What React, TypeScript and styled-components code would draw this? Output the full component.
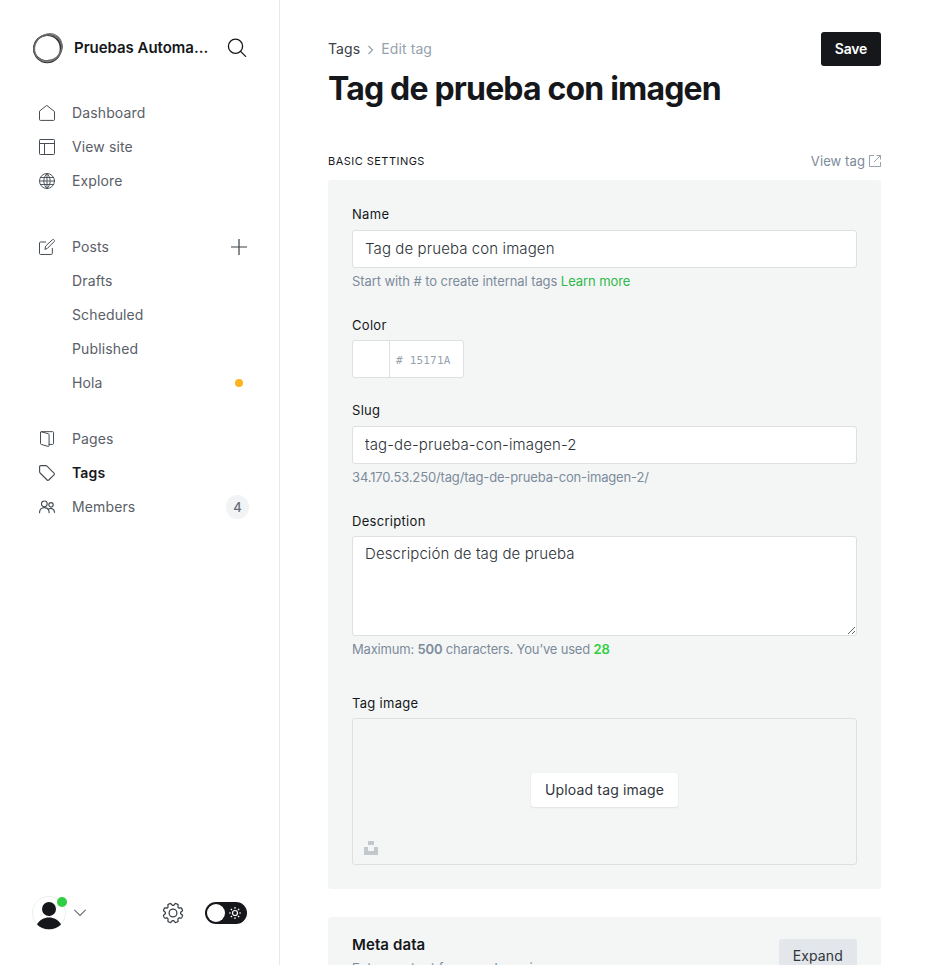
import React from "react";
import styled, { createGlobalStyle } from "styled-components";

const GlobalStyle = createGlobalStyle`
  *, *::before, *::after { box-sizing: border-box; }
  html, body { margin: 0; height: 100%; overflow: hidden; background: #fff; }
  body {
    font-family: Inter, "Liberation Sans", sans-serif;
    font-size: 15px;
    line-height: 1.6;
    letter-spacing: 0.2px;
    color: #15171a;
  }
  button, input, textarea { font-family: inherit; letter-spacing: inherit; }
`;

const Layout = styled.div`
  display: flex;
  height: 965px;
  overflow: hidden;
`;

const Sidebar = styled.nav`
  display: flex;
  flex-direction: column;
  flex: 0 0 280px;
  height: 965px;
  padding: 32px 0 34px;
  border-right: 1px solid #e6e9eb;
  background: #fff;
`;

const SiteHeader = styled.header`
  display: flex;
  align-items: center;
  height: 32px;
  padding: 0 32px;
  margin-bottom: 32px;
`;

const SiteName = styled.div`
  width: 136px;
  margin-left: 10px;
  white-space: nowrap;
  font-size: 15px;
  font-weight: 600;
  line-height: 20px;
  letter-spacing: -0.03px;
`;

const SearchButton = styled.button`
  display: flex;
  margin-left: 17px;
  padding: 0;
  border: 0;
  background: none;
  color: #15171a;
`;

const NavGroup = styled.ul<{ $gap: number }>`
  list-style: none;
  margin: 0 0 ${(p) => p.$gap}px;
  padding: 0 30px 0 39px;
`;

const NavItem = styled.li<{ $active?: boolean }>`
  display: flex;
  align-items: center;
  height: 34px;
  font-size: 14px;
  letter-spacing: 0.13px;
  font-weight: ${(p) => (p.$active ? 600 : 400)};
  color: ${(p) => (p.$active ? "#15171a" : "#5a6067")};
`;

const NavIcon = styled.span`
  display: flex;
  width: 33px;
  color: #454c54;
`;

const NavLabel = styled.span`
  flex: 1;
`;

const AddButton = styled.button`
  display: flex;
  margin-right: 2px;
  padding: 0;
  border: 0;
  background: none;
  color: #394047;
`;

const StatusDot = styled.span`
  width: 8px;
  height: 8px;
  margin-right: 6px;
  border-radius: 50%;
  background: #ffb41f;
`;

const CountBadge = styled.span`
  width: 23px;
  height: 24px;
  border-radius: 12px;
  background: #f1f3f5;
  color: #626d79;
  font-size: 13px;
  font-weight: 500;
  line-height: 24px;
  text-align: center;
`;

const SidebarFooter = styled.footer`
  display: flex;
  align-items: center;
  height: 36px;
  margin-top: auto;
  padding: 0 32px;
`;

const Avatar = styled.div`
  position: relative;
  display: flex;
  width: 34px;
  height: 34px;
`;

const OnlineDot = styled.span`
  position: absolute;
  top: 1px;
  right: -1px;
  width: 10px;
  height: 10px;
  border-radius: 50%;
  background: #30cf43;
`;

const ChevronSlot = styled.span`
  display: flex;
  margin-left: 8px;
`;

const SettingsSlot = styled.span`
  display: flex;
  margin-left: 76px;
`;

const ThemeToggle = styled.div`
  display: flex;
  align-items: center;
  justify-content: space-between;
  width: 42px;
  height: 22px;
  margin-left: 21px;
  padding: 0 5px 0 2px;
  border-radius: 11px;
  background: #15171a;
`;

const ToggleKnob = styled.span`
  width: 18px;
  height: 18px;
  border-radius: 50%;
  background: #fff;
`;

const Main = styled.main`
  flex: 1;
  min-width: 0;
  padding: 32px 48px 0;
`;

const TopBar = styled.header`
  display: flex;
  justify-content: space-between;
  align-items: flex-start;
  height: 34px;
`;

const Breadcrumb = styled.div`
  display: flex;
  align-items: center;
  height: 34px;
  font-size: 14px;
  letter-spacing: 0.1px;
  color: #394047;
`;

const CrumbCurrent = styled.span`
  color: #95a1ad;
`;

const CrumbArrow = styled.svg`
  margin: 1px 7px 0 7px;
`;

const Button = styled.button<{ $kind: "primary" | "white" | "grey" }>`
  height: 34px;
  padding: 0 14px;
  border: 0;
  border-radius: 3px;
  font-size: 14px;
  line-height: 34px;
  white-space: nowrap;
  letter-spacing: ${(p) => (p.$kind === "primary" ? "-0.25px" : "0.15px")};
  font-weight: ${(p) => (p.$kind === "primary" ? 600 : 400)};
  color: ${(p) => (p.$kind === "primary" ? "#fff" : "#30363c")};
  background: ${(p) => ({ primary: "#15171a", white: "#fff", grey: "#e3e7eb" })[p.$kind]};
  box-shadow: ${(p) => (p.$kind === "white" ? "0 0 1px rgba(0,0,0,.1), 0 1px 2px rgba(0,0,0,.07)" : "none")};
`;

const Title = styled.h1`
  margin: 2px 0 0;
  height: 42px;
  font-size: 32px;
  font-weight: 700;
  line-height: 42px;
  letter-spacing: -0.82px;
  white-space: nowrap;
`;

const SectionBar = styled.div`
  display: flex;
  justify-content: space-between;
  align-items: center;
  height: 20px;
  margin: 41px 0 9px;
`;

const SectionTitle = styled.h4`
  margin: 0;
  padding-top: 1px;
  font-size: 11px;
  font-weight: 400;
  letter-spacing: 0.47px;
  text-transform: uppercase;
`;

const ViewLink = styled.a`
  display: flex;
  align-items: center;
  gap: 4px;
  font-size: 13px;
  letter-spacing: 0.1px;
  color: #7c8b9a;
`;

const Panel = styled.section<{ $height?: number }>`
  height: ${(p) => (p.$height ? `${p.$height}px` : "auto")};
  margin-bottom: 28px;
  padding: 24px;
  border-radius: 3px;
  background: #f4f6f6;
`;

const Field = styled.div<{ $gap: number }>`
  margin-bottom: ${(p) => p.$gap}px;
`;

const Label = styled.label<{ $tight?: boolean }>`
  display: block;
  height: 20px;
  margin-bottom: ${(p) => (p.$tight ? 5 : 6)}px;
  font-size: 13px;
  font-weight: 400;
  line-height: 20px;
  letter-spacing: 0.3px;
`;

const TextInput = styled.input`
  display: block;
  width: 100%;
  height: 38px;
  padding: 0 12px 2px;
  border: 1px solid #dddfe0;
  border-radius: 3px;
  background: #fff;
  color: #2c3238;
  font-size: 15px;
  font-weight: 300;
  letter-spacing: 0.1px;
  outline: 0;
`;

const TextArea = styled.textarea`
  display: block;
  width: 100%;
  height: 100px;
  padding: 5px 12px;
  border: 1px solid #dddfe0;
  border-radius: 3px;
  background: #fff;
  color: #2c3238;
  font-size: 15px;
  font-weight: 300;
  letter-spacing: 0.1px;
  line-height: 24px;
  resize: vertical;
  outline: 0;
`;

const Hint = styled.p<{ $tracking?: number }>`
  height: 20px;
  margin: 3px 0 0;
  font-size: 13px;
  line-height: 20px;
  letter-spacing: ${(p) => p.$tracking ?? -0.15}px;
  color: #7c8b9a;
  white-space: nowrap;
`;

const GreenLink = styled.a`
  color: #30b94a;
`;

const UsedCount = styled.b`
  color: #30cf43;
  font-weight: 600;
`;

const Limit = styled.b`
  font-weight: 600;
`;

const ColorControl = styled.div`
  display: flex;
  width: 112px;
  height: 38px;
  border: 1px solid #dddfe0;
  border-radius: 3px;
  background: #fff;
`;

const Swatch = styled.span`
  width: 37px;
  border-right: 1px solid #dddfe0;
`;

const HexValue = styled.span`
  padding: 2px 0 0 6px;
  font-family: "DejaVu Sans Mono", monospace;
  font-size: 11px;
  line-height: 36px;
  letter-spacing: 0.2px;
  color: #98a2ad;
`;

const ImageDrop = styled.div`
  position: relative;
  display: flex;
  align-items: center;
  justify-content: center;
  height: 147px;
  padding-bottom: 3px;
  border: 1px solid #dddfe0;
  border-radius: 3px;
`;

const UnsplashMark = styled.svg`
  position: absolute;
  left: 11px;
  bottom: 9px;
`;

const MetaRow = styled.div`
  display: flex;
  justify-content: space-between;
  margin-top: -2px;
`;

const MetaTitle = styled.h4`
  margin: -4px 0 0;
  font-size: 15px;
  line-height: 20px;
  font-weight: 600;
  letter-spacing: 0.1px;
`;

const MetaText = styled.p`
  margin: 3px 0 0;
  font-size: 13px;
  line-height: 20px;
  letter-spacing: 0.1px;
  color: #7c8b9a;
`;

const Stroke = ({ size = 16, width = 1.5, children }: { size?: number; width?: number; children: React.ReactNode }) => (
  <svg width={size} height={size} viewBox="0 0 24 24" fill="none" stroke="currentColor" strokeWidth={width} strokeLinecap="round" strokeLinejoin="round">
    {children}
  </svg>
);

const icons = {
  home: <Stroke><path d="M.75 9.8v12c0 .8.6 1.3 1.3 1.3h19.9c.7 0 1.3-.5 1.3-1.3v-12L12 .9z" /></Stroke>,
  site: <Stroke><rect x=".75" y=".75" width="22.500" height="22.500" rx="1.200" /><path d="M.75 6.750h22.500M8.250 6.750v16.500" /></Stroke>,
  globe: <Stroke width={1.4}><circle cx="12" cy="12" r="11.250" /><path d="M2 6.750h20M2 17.250h20M.75 12h22.500M12 .75v22.500M12 .75C5.500 7 5.500 17 12 23.250M12 .75c6.500 6.250 6.500 16.250 0 22.500" /></Stroke>,
  posts: <Stroke><path d="M20 14v7.700c0 .8-.7 1.500-1.500 1.500H2.250c-.8 0-1.500-.7-1.500-1.500V6c0-.8.7-1.500 1.500-1.500H10M9 15l1-4.500L19.900 1.300c.8-.8 2-.8 2.700 0 .8.8.8 2 0 2.700L13 13.700z" /></Stroke>,
  pages: <Stroke><path d="M2.300 2v16.800c0 .7.4 1.200 1.100 1.400l10.400 2.900c.7.200 1.300-.2 1.300-1V5.500c0-.7-.4-1.200-1.100-1.400L3.600 1.200C2.800 1 2.300 1.300 2.300 2zM3.500 1h17c.8 0 1.300.5 1.300 1.200v16.600c0 .8-.5 1.300-1.300 1.300H15" /></Stroke>,
  tags: <Stroke width={1.7}><path d="M.9 2.600v7.600c0 .7.3 1.300.8 1.800l10.500 10.500c.8.800 1.800.8 2.500 0l7.800-7.800c.8-.7.8-1.700 0-2.500L12 1.700c-.5-.5-1.100-.8-1.800-.8H2.600c-1 0-1.700.7-1.700 1.700z" /></Stroke>,
  members: <Stroke width={1.7}><circle cx="8" cy="7.300" r="4.300" /><circle cx="18" cy="8.800" r="3.300" /><path d="M.8 20.500c0-4.700 3-7.600 7.200-7.600s7.200 2.900 7.200 7.600M15 14.800c3.800-2 8.200.5 8.200 5.200" /></Stroke>,
};

const OrbLogo = () => (
  <svg width="32" height="32" viewBox="0 0 32 32" fill="none">
    <path d="M27 5c5 7 3 17-4 22 5-5 6-13 2-20zM13 2.500C20-.5 28 3 30 10c-4-6-10-8.500-17-7.500z" fill="#888" fillOpacity=".7" />
    <ellipse cx="15.300" cy="16.800" rx="13.500" ry="13.700" stroke="#333" strokeWidth="1.600" />
    <ellipse cx="16.300" cy="15.700" rx="14.200" ry="12.800" stroke="#555" strokeWidth="1" transform="rotate(-18 16 16)" />
    <ellipse cx="16" cy="15.600" rx="13" ry="14.700" stroke="#777" strokeWidth="1" transform="rotate(35 16 16)" />
    <ellipse cx="15.800" cy="16.400" rx="12.600" ry="14.300" stroke="#666" strokeWidth=".8" transform="rotate(70 16 16)" />
  </svg>
);

// Eight flat-topped teeth sampled around a circle of radius ~9.
const gearPath = (() => {
  const pts: string[] = [];
  for (let i = 0; i < 128; i++) {
    const a = (i / 128) * Math.PI * 2;
    const w = Math.max(-1, Math.min(0.9, 1.6 * Math.cos(8 * a + Math.PI) + 0.3));
    const r = 9 + 1.2 * w;
    pts.push(`${(11 + r * Math.cos(a)).toFixed(2)} ${(11 + r * Math.sin(a)).toFixed(2)}`);
  }
  return `M${pts.join("L")}Z`;
})();

export default function App() {
  return (
    <>
      <GlobalStyle />
      <Layout>
        <Sidebar>
          <SiteHeader>
            <OrbLogo />
            <SiteName>Pruebas Automa...</SiteName>
            <SearchButton aria-label="Search">
              <svg width="20" height="20" viewBox="0 0 20 20" fill="none" stroke="currentColor" strokeWidth="1.300" strokeLinecap="round">
                <circle cx="8.500" cy="8.300" r="7.100" /><path d="M13.600 13.400l5 5" />
              </svg>
            </SearchButton>
          </SiteHeader>
          <NavGroup $gap={32}>
            <NavItem><NavIcon>{icons.home}</NavIcon><NavLabel>Dashboard</NavLabel></NavItem>
            <NavItem><NavIcon>{icons.site}</NavIcon><NavLabel>View site</NavLabel></NavItem>
            <NavItem><NavIcon>{icons.globe}</NavIcon><NavLabel>Explore</NavLabel></NavItem>
          </NavGroup>
          <NavGroup $gap={22}>
            <NavItem>
              <NavIcon>{icons.posts}</NavIcon><NavLabel>Posts</NavLabel>
              <AddButton aria-label="New post">
                <svg width="16" height="16" viewBox="0 0 16 16" stroke="currentColor" strokeWidth="1.200"><path d="M8 0v16M0 8h16" /></svg>
              </AddButton>
            </NavItem>
            <NavItem><NavIcon /><NavLabel>Drafts</NavLabel></NavItem>
            <NavItem><NavIcon /><NavLabel>Scheduled</NavLabel></NavItem>
            <NavItem><NavIcon /><NavLabel>Published</NavLabel></NavItem>
            <NavItem><NavIcon /><NavLabel>Hola</NavLabel><StatusDot /></NavItem>
          </NavGroup>
          <NavGroup $gap={0}>
            <NavItem><NavIcon>{icons.pages}</NavIcon><NavLabel>Pages</NavLabel></NavItem>
            <NavItem $active><NavIcon>{icons.tags}</NavIcon><NavLabel>Tags</NavLabel></NavItem>
            <NavItem><NavIcon>{icons.members}</NavIcon><NavLabel>Members</NavLabel><CountBadge>4</CountBadge></NavItem>
          </NavGroup>
          <SidebarFooter>
            <Avatar>
              <svg width="34" height="34" viewBox="0 0 34 34">
                <circle cx="17" cy="17" r="16.500" fill="#fff" stroke="#e6e9eb" strokeWidth=".8" />
                <circle cx="17" cy="13" r="7" fill="#15171a" />
                <path d="M5 28.400C7.500 24 12 21.500 17 21.500s9.500 2.500 12 6.900C26 31.500 22 33.300 17 33.300S8 31.500 5 28.400z" fill="#15171a" />
              </svg>
              <OnlineDot />
            </Avatar>
            <ChevronSlot>
              <svg width="12" height="8" viewBox="0 0 12 8" fill="none" stroke="#626d79" strokeWidth="1.100" strokeLinecap="round"><path d="M.6 1.200L6 6.400l5.400-5.200" /></svg>
            </ChevronSlot>
            <SettingsSlot>
              <svg width="22" height="22" viewBox="-.3 -.3 22.600 22.600" fill="none" stroke="#394047" strokeWidth="1.300" strokeLinejoin="round">
                <path d={gearPath} /><circle cx="11" cy="11" r="4" />
              </svg>
            </SettingsSlot>
            <ThemeToggle>
              <ToggleKnob />
              <svg width="14" height="14" viewBox="0 0 14 14" fill="none" stroke="#fff" strokeWidth="1.200">
                <circle cx="7" cy="7" r="2.500" />
                <path d="M7 1v1.800M7 11.200V13M1 7h1.800M11.200 7H13M2.800 2.800L4 4M10 10l1.200 1.200M11.200 2.800L10 4M4 10l-1.200 1.200" />
              </svg>
            </ThemeToggle>
          </SidebarFooter>
        </Sidebar>
        <Main>
          <TopBar>
            <Breadcrumb>
              Tags
              <CrumbArrow width="7" height="10" viewBox="0 0 7 10" fill="none" stroke="#95a1ad" strokeWidth="1.200"><path d="M1.500 1L5.500 5l-4 4" /></CrumbArrow>
              <CrumbCurrent>Edit tag</CrumbCurrent>
            </Breadcrumb>
            <Button $kind="primary">Save</Button>
          </TopBar>
          <Title>Tag de prueba con imagen</Title>
          <SectionBar>
            <SectionTitle>Basic settings</SectionTitle>
            <ViewLink>
              View tag
              <svg width="12" height="12" viewBox="0 0 12 12" fill="none" stroke="#95a1ad" strokeWidth="1"><path d="M5 .5H.5v11h11V7M7.500.5h4v4M11.500.5L5 7" /></svg>
            </ViewLink>
          </SectionBar>
          <Panel $height={709}>
            <Field $gap={24}>
              <Label>Name</Label>
              <TextInput defaultValue="Tag de prueba con imagen" />
              <Hint $tracking={-0.08}>Start with # to create internal tags <GreenLink>Learn more</GreenLink></Hint>
            </Field>
            <Field $gap={22}>
              <Label $tight>Color</Label>
              <ColorControl><Swatch /><HexValue># 15171A</HexValue></ColorControl>
            </Field>
            <Field $gap={24}>
              <Label>Slug</Label>
              <TextInput defaultValue="tag-de-prueba-con-imagen-2" />
              <Hint>34.170.53.250/tag/tag-de-prueba-con-imagen-2/</Hint>
            </Field>
            <Field $gap={34}>
              <Label $tight>Description</Label>
              <TextArea defaultValue="Descripción de tag de prueba" />
              <Hint $tracking={-0.18}>Maximum: <Limit>500</Limit> characters. You’ve used <UsedCount>28</UsedCount></Hint>
            </Field>
            <Field $gap={0}>
              <Label $tight>Tag image</Label>
              <ImageDrop>
                <Button $kind="white">Upload tag image</Button>
                <UnsplashMark width="14" height="14" viewBox="0 0 14 14" fill="#c3c8cd"><path d="M4 0h6v4H4zM0 6h4v4h6V6h4v8H0z" /></UnsplashMark>
              </ImageDrop>
            </Field>
          </Panel>
          <Panel>
            <MetaRow>
              <div>
                <MetaTitle>Meta data</MetaTitle>
                <MetaText>Extra content for search engines</MetaText>
              </div>
              <Button $kind="grey">Expand</Button>
            </MetaRow>
          </Panel>
        </Main>
      </Layout>
    </>
  );
}
